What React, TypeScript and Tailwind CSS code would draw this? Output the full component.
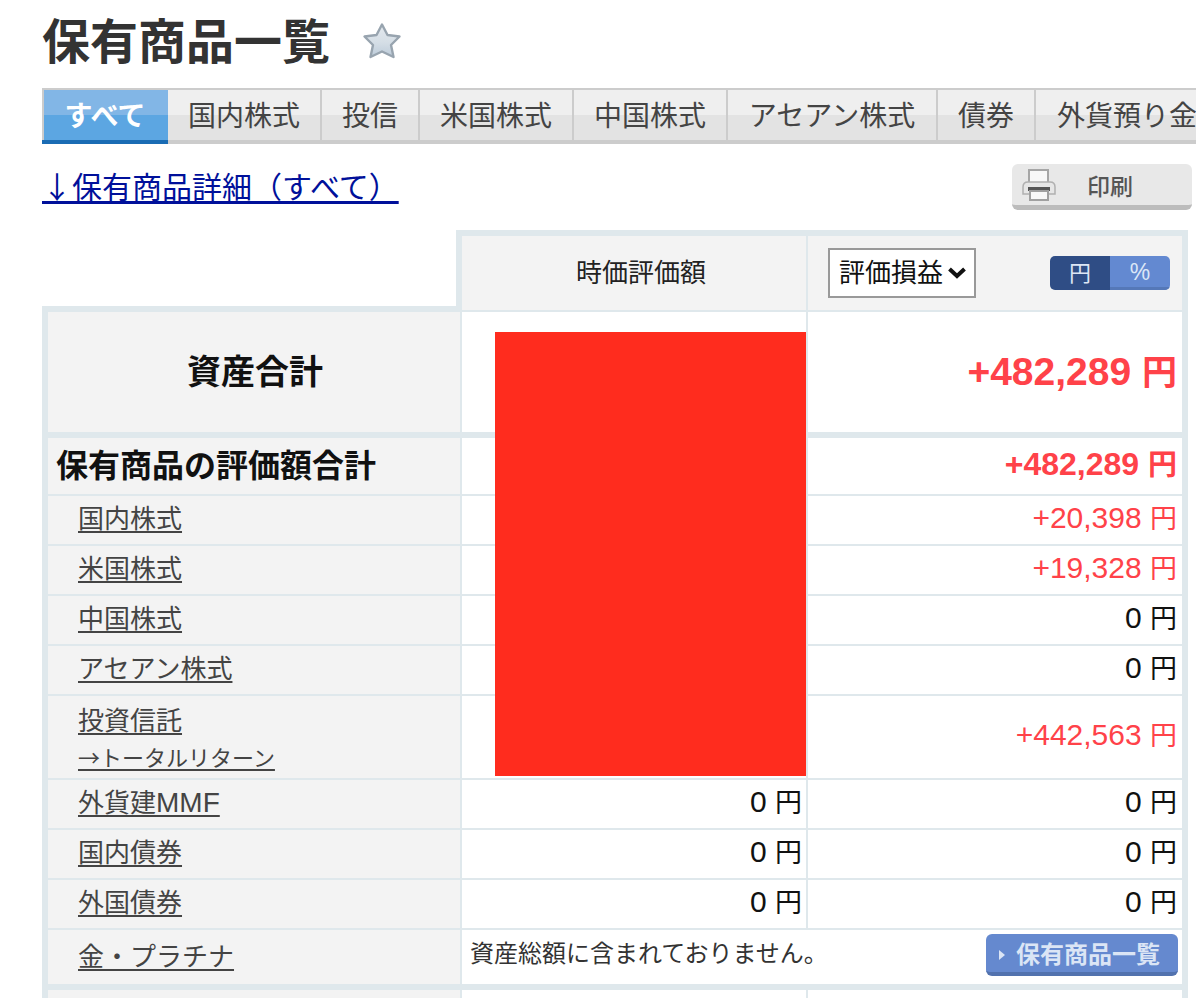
import type { ReactNode } from "react";

const SANS = "font-['Liberation_Sans','Noto_Sans_CJK_JP',sans-serif]";
const CJK = "font-['Noto_Sans_CJK_JP',sans-serif]";

const tabs = [
  { label: "国内株式", w: "w-[154px]" },
  { label: "投信", w: "w-[98px]" },
  { label: "米国株式", w: "w-[154px]" },
  { label: "中国株式", w: "w-[154px]" },
  { label: "アセアン株式", w: "w-[210px]" },
  { label: "債券", w: "w-[98px]" },
  { label: "外貨預り金", w: "w-[184px]" },
];

function Star() {
  return (
    <svg width="40" height="38" viewBox="0 0 40 38" className="ml-[32px] mt-[4px]">
      <defs>
        <linearGradient id="starFill" x1="0" y1="0" x2="0" y2="1">
          <stop offset="0" stopColor="#e4e9ee" />
          <stop offset="0.55" stopColor="#d5dee6" />
          <stop offset="1" stopColor="#bccbd9" />
        </linearGradient>
      </defs>
      <path
        d="M20 2.5 L25.5 13 L37.5 14.5 L29 23 L31.5 35 L20 29.5 L8.5 35 L11 23 L2.5 14.5 L14.5 13 Z"
        fill="url(#starFill)"
        stroke="#98a4af"
        strokeWidth="2.4"
        strokeLinejoin="round"
      />
    </svg>
  );
}

function Printer() {
  return (
    <svg width="34" height="32" viewBox="0 0 34 32" className="shrink-0">
      <rect x="7" y="1" width="19" height="13" fill="#f8f8f8" stroke="#a6a6a6" strokeWidth="2" />
      <path d="M6 13 H28 Q33 13 33 18 V25 H1 V18 Q1 13 6 13 Z" fill="#e6e6e6" stroke="#b0b0b0" strokeWidth="1.5" />
      <rect x="6" y="18" width="22" height="4" fill="#555" />
      <rect x="8" y="22" width="18" height="9" fill="#f8f8f8" stroke="#a0a0a0" strokeWidth="2" />
    </svg>
  );
}

function Money({ v, size = "text-[30px]", yen = "text-[27px]" }: { v: string; size?: string; yen?: string }) {
  return (
    <span className={`${size} whitespace-pre`}>
      {v} <span className={yen}>円</span>
    </span>
  );
}

type RowProps = {
  name: ReactNode;
  sub?: ReactNode;
  h: string;
  value?: string;
  gain: string;
  red?: boolean;
};

function Row({ name, sub, h, value, gain, red }: RowProps) {
  return (
    <div className={`flex ${h} border-b-2 border-[#dfe8ec]`}>
      <div className="w-[412px] bg-[#f3f3f3] pl-[30px] flex flex-col justify-center text-[26px] leading-[36px] text-[#444]">
        <div className={sub ? "pt-[2px]" : "pb-[2px]"}>
          <span className="underline underline-offset-[3px]">{name}</span>
        </div>
        {sub && (
          <div className="text-[22px] leading-[30px] mt-[2px]">
            <span className="underline underline-offset-[3px]">{sub}</span>
          </div>
        )}
      </div>
      <div className="w-[2px] bg-[#dfe8ec]" />
      <div className="w-[344px] flex items-center justify-end pr-[4px] pb-[5px] text-[#111]">
        {value && <Money v={value} />}
      </div>
      <div className="w-[2px] bg-[#dfe8ec]" />
      <div className={`w-[374px] flex items-center justify-end pr-[5px] pb-[5px] ${red ? "text-[#ff4249]" : "text-[#111]"}`}>
        <Money v={gain} />
      </div>
    </div>
  );
}

export default function App() {
  return (
    <div className={`w-[1196px] h-[998px] overflow-hidden bg-white ${SANS}`}>
      <div className="pl-[42px]">
        {/* title */}
        <div className="flex items-start h-[88px] pt-[18px]">
          <h1 className="text-[48px] leading-[50px] font-bold text-[#333]">保有商品一覧</h1>
          <Star />
        </div>

        {/* tabs */}
        <div className="flex w-[1320px] h-[56px] border-t-2 border-b-4 border-[#cccccc] bg-[#ccc]">
          <div className="w-[126px] h-[54px] pl-[2px] flex flex-col bg-[#cccccc]">
            <div className="h-[50px] pt-[3px] pr-[2px] bg-[linear-gradient(#82b6e6_0,#82b6e6_50%,#5ca6e2_50%,#5ca6e2_100%)] flex items-center justify-center text-[28px] font-bold text-white">
              すべて
            </div>
            <div className="h-[4px] -ml-[2px] bg-[#1a6cb4]" />
          </div>
          {tabs.map((t) => (
            <div
              key={t.label}
              className={`${t.w} h-[50px] pt-[3px] border-r-2 border-[#cccccc] bg-[linear-gradient(#efefef_0,#efefef_50%,#e3e3e3_50%,#e3e3e3_100%)] flex items-center justify-center text-[28px] text-[#444] whitespace-nowrap`}
            >
              {t.label}
            </div>
          ))}
        </div>

        {/* link + print */}
        <div className="flex h-[86px]">
          <div className="w-[970px] pt-[20px]">
            <a className="text-[30px] leading-[42px] text-[#00109a] underline underline-offset-[3px] whitespace-pre">
              <span className={CJK}>↓</span>保有商品詳細（すべて）
            </a>
          </div>
          <div className="w-[180px] h-[46px] mt-[20px] rounded-[6px] bg-[#e8e8e8] border-b-[5px] border-[#bcbcbc] flex items-center pl-[10px]">
            <Printer />
            <span className="ml-[31px] pt-[5px] text-[23px] font-medium text-[#555]">印刷</span>
          </div>
        </div>

        {/* table header */}
        <div className="flex h-[82px] w-[1146px]">
          <div className="w-[414px] h-[6px] self-end bg-[#dfe8ec]" />
          <div className="flex border-t-[6px] border-l-[6px] border-r-[6px] border-b-2 border-[#dfe8ec] bg-[#f3f3f3]">
            <div className="w-[344px] pl-[14px] flex items-center justify-center text-[26px] text-[#222]">時価評価額</div>
            <div className="w-[2px] bg-[#dfe8ec]" />
            <div className="w-[374px] flex items-center pl-[20px]">
              <div className="w-[148px] h-[50px] border-2 border-[#999999] bg-white flex items-center pl-[9px] text-[26px] text-[#111]">
                <span>評価損益</span>
                <svg width="20" height="14" viewBox="0 0 20 14" className="ml-[4px]">
                  <path d="M2.5 3 L10 10 L17.5 3" fill="none" stroke="#111" strokeWidth="4" />
                </svg>
              </div>
              <div className="ml-[74px] flex w-[120px] h-[34px] rounded-[5px] overflow-hidden">
                <div className="w-[60px] bg-[#2f4d85] text-[#dde6f5] flex items-center justify-center text-[22px]">円</div>
                <div className="w-[60px] bg-[#6389d1] text-[#dbe6f7] border-b-[3px] border-[#5578b8] pt-[2px] flex items-center justify-center text-[23px]">%</div>
              </div>
            </div>
          </div>
        </div>

        {/* table body */}
        <div className="relative w-[1146px] border-l-[6px] border-r-[6px] border-[#dfe8ec]">
          {/* total */}
          <div className="flex h-[120px]">
            <div className="w-[412px] bg-[#f3f3f3] pl-[2px] flex items-center justify-center text-[34px] font-bold text-[#111]">資産合計</div>
            <div className="w-[2px] bg-[#dfe8ec]" />
            <div className="w-[344px]" />
            <div className="w-[2px] bg-[#dfe8ec]" />
            <div className="w-[374px] flex items-center justify-end pr-[5px] font-bold text-[#ff4249]">
              <Money v="+482,289" size="text-[39px]" yen="text-[35px]" />
            </div>
          </div>
          <div className="h-[6px] bg-[#dfe8ec]" />
          {/* subtotal */}
          <div className="flex h-[58px] border-b-2 border-[#dfe8ec]">
            <div className="w-[412px] bg-[#f3f3f3] pl-[8px] flex items-center text-[32px] font-bold text-[#111]">保有商品の評価額合計</div>
            <div className="w-[2px] bg-[#dfe8ec]" />
            <div className="w-[344px]" />
            <div className="w-[2px] bg-[#dfe8ec]" />
            <div className="w-[374px] flex items-center justify-end pr-[5px] pb-[5px] font-bold text-[#ff4249]">
              <Money v="+482,289" size="text-[32px]" yen="text-[29px]" />
            </div>
          </div>

          <Row name="国内株式" h="h-[50px]" gain="+20,398" red />
          <Row name="米国株式" h="h-[50px]" gain="+19,328" red />
          <Row name="中国株式" h="h-[50px]" gain="0" />
          <Row name="アセアン株式" h="h-[50px]" gain="0" />
          <Row
            name="投資信託"
            sub={<><span className={CJK}>→</span>トータルリターン</>}
            h="h-[84px]"
            gain="+442,563"
            red
          />
          <Row name={<>外貨建<span className="text-[28px]">MMF</span></>} h="h-[50px]" value="0" gain="0" />
          <Row name="国内債券" h="h-[50px]" value="0" gain="0" />
          <Row name="外国債券" h="h-[50px]" value="0" gain="0" />

          {/* gold row */}
          <div className="flex h-[54px]">
            <div className="w-[412px] bg-[#f3f3f3] pl-[30px] flex items-center text-[26px] text-[#444]">
              <span className="underline underline-offset-[3px]">金・プラチナ</span>
            </div>
            <div className="w-[2px] bg-[#dfe8ec]" />
            <div className="w-[720px] flex items-start justify-between pl-[8px] pr-[4px] pt-[4px]">
              <span className="text-[24px] leading-[40px] text-[#333]">資産総額に含まれておりません。</span>
              <div className="w-[192px] h-[42px] rounded-[6px] bg-[#6589cf] border-b-[4px] border-[#5272ae] flex items-center pl-[12px] pt-[3px] text-[24px] font-bold text-[#dbe5f5]">
                <svg width="8" height="10" viewBox="0 0 8 10" className="mr-[10px]">
                  <path d="M1 0 L7 5 L1 10 Z" fill="#dbe5f5" />
                </svg>
                保有商品一覧
              </div>
            </div>
          </div>
          <div className="h-[6px] bg-[#dfe8ec]" />
          <div className="flex h-[20px]">
            <div className="w-[412px] bg-[#f3f3f3]" />
            <div className="w-[2px] bg-[#dfe8ec]" />
            <div className="w-[344px]" />
            <div className="w-[2px] bg-[#dfe8ec]" />
          </div>

          {/* redaction */}
          <div className="absolute left-[447px] top-[20px] w-[311px] h-[444px] bg-[#ff2c1e]" />
        </div>
      </div>
    </div>
  );
}
